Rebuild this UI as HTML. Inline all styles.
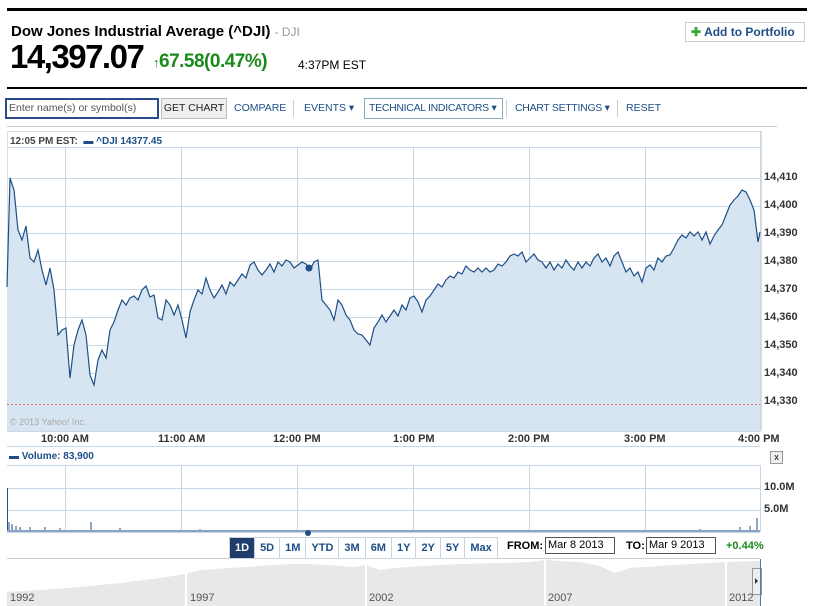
<!DOCTYPE html>
<html><head><style>
body{margin:0;width:823px;height:606px;background:#fff;font-family:"Liberation Sans",sans-serif;position:relative;overflow:hidden}
.a{position:absolute;white-space:nowrap}
.nav{font-size:10.5px;color:#1d4f86;top:102px}
.ax{font-size:11px;font-weight:bold;color:#333}
.rb{display:inline-block;border-right:1px solid #c8d3e0;height:20px;line-height:20px;padding:0 5px;font-size:11px;font-weight:bold;color:#1d4f86}
</style></head><body>
<div class="a" style="left:7px;top:8px;width:800px;height:3px;background:#000"></div>
<div class="a" style="left:11px;top:23px;font-size:15px;font-weight:bold;color:#000">Dow Jones Industrial Average (^DJI) <span style="font-weight:normal;color:#999;font-size:12px">- DJI</span></div>
<div class="a" style="left:685px;top:22px;width:118px;height:18px;border:1px solid #ccc;font-size:12px;font-weight:bold;color:#1d4f86;line-height:18px"><span style="color:#3a3;margin:0 3px 0 5px">✚</span>Add to Portfolio</div>
<div class="a" style="left:10px;top:38px;font-size:33px;font-weight:bold;color:#000;letter-spacing:-1.5px">14,397.07</div>
<div class="a" style="left:153px;top:51px;font-size:19px;font-weight:bold;color:#1a8a1a;letter-spacing:-0.5px"><span style="font-size:13px">↑</span>67.58(0.47%)</div>
<div class="a" style="left:298px;top:58px;font-size:12px;color:#000">4:37PM EST</div>
<div class="a" style="left:7px;top:87px;width:800px;height:2px;background:#000"></div>
<div class="a" style="left:5px;top:98px;width:148px;height:17px;border:2px solid #2a4a8a;font-size:10.5px;color:#555;line-height:17px;padding-left:2px">Enter name(s) or symbol(s)</div>
<div class="a" style="left:161px;top:98px;width:64px;height:19px;border:1px solid #bbb;background:#eee;font-size:10.5px;color:#222;line-height:19px;text-align:center">GET CHART</div>
<div class="a nav" style="left:234px">COMPARE</div>
<div class="a" style="left:293px;top:100px;width:1px;height:17px;background:#ccc"></div>
<div class="a nav" style="left:304px">EVENTS ▾</div>
<div class="a" style="left:364px;top:98px;width:137px;height:19px;border:1px solid #8ab"></div>
<div class="a nav" style="left:369px;letter-spacing:-0.3px">TECHNICAL INDICATORS ▾</div>
<div class="a" style="left:506px;top:100px;width:1px;height:17px;background:#ccc"></div>
<div class="a nav" style="left:515px;letter-spacing:-0.3px">CHART SETTINGS ▾</div>
<div class="a" style="left:617px;top:100px;width:1px;height:17px;background:#ccc"></div>
<div class="a nav" style="left:626px">RESET</div>
<div class="a" style="left:7px;top:126px;width:770px;height:1px;background:#ccc"></div>
<div class="a" style="left:7px;top:131px;width:753px;height:300px;border:1px solid #ddd;border-bottom:none"></div>
<div class="a" style="left:10px;top:136px;font-size:10px;font-weight:bold;color:#444">12:05 PM EST: &nbsp;<span style="color:#1d4f86">▬ ^DJI 14377.45</span></div>
<svg class="a" style="left:0;top:0" width="823" height="606">
<g stroke="#c7d7e6" stroke-width="1">
<line x1="7" y1="147.5" x2="760" y2="147.5"/>
<line x1="7" y1="178.5" x2="760" y2="178.5"/><line x1="7" y1="206.5" x2="760" y2="206.5"/><line x1="7" y1="233.5" x2="760" y2="233.5"/><line x1="7" y1="261.5" x2="760" y2="261.5"/><line x1="7" y1="289.5" x2="760" y2="289.5"/><line x1="7" y1="317.5" x2="760" y2="317.5"/><line x1="7" y1="345.5" x2="760" y2="345.5"/><line x1="7" y1="373.5" x2="760" y2="373.5"/>
<line x1="65.5" y1="147" x2="65.5" y2="431"/><line x1="181.5" y1="147" x2="181.5" y2="431"/><line x1="297.5" y1="147" x2="297.5" y2="431"/><line x1="413.5" y1="147" x2="413.5" y2="431"/><line x1="529.5" y1="147" x2="529.5" y2="431"/><line x1="645.5" y1="147" x2="645.5" y2="431"/><line x1="760.5" y1="131" x2="760.5" y2="431"/>
<line x1="7" y1="431.5" x2="760" y2="431.5"/>
<line x1="7" y1="446.5" x2="760" y2="446.5"/>
<line x1="7" y1="465.5" x2="760" y2="465.5"/><line x1="7" y1="488.5" x2="760" y2="488.5"/><line x1="7" y1="510.5" x2="760" y2="510.5"/><line x1="7" y1="532.5" x2="760" y2="532.5"/>
<line x1="65.5" y1="465" x2="65.5" y2="532"/><line x1="181.5" y1="465" x2="181.5" y2="532"/><line x1="297.5" y1="465" x2="297.5" y2="532"/><line x1="413.5" y1="465" x2="413.5" y2="532"/><line x1="529.5" y1="465" x2="529.5" y2="532"/><line x1="645.5" y1="465" x2="645.5" y2="532"/><line x1="760.5" y1="465" x2="760.5" y2="532"/>
</g>
<polygon fill="#d6e5f1" stroke="none" points="7,431 7,287 10,178 14,190 18,230 22,240 26,226 30,258 34,262 38,250 42,270 46,285 50,268 54,290 58,335 62,330 66,328 70,378 74,345 78,330 82,320 86,335 90,375 94,385 98,360 102,350 106,358 110,330 114,322 118,310 122,300 126,305 130,298 134,296 138,300 142,290 146,286 150,297 154,295 158,318 162,320 166,300 170,305 174,315 178,305 182,320 186,338 190,312 194,300 198,290 202,294 206,278 210,290 214,298 218,292 222,285 226,294 230,282 234,286 238,280 242,274 246,278 250,265 254,262 258,270 262,275 266,270 270,264 274,272 278,262 282,266 286,260 290,262 294,268 298,265 302,262 306,264 310,270 314,262 318,260 322,300 326,305 330,310 334,320 338,300 342,305 346,315 350,320 354,330 358,334 362,335 366,340 370,345 374,328 378,322 382,315 386,322 390,316 394,310 398,316 402,305 406,310 410,298 414,296 418,302 422,312 426,300 430,296 434,290 438,284 442,287 446,280 450,276 454,278 458,272 462,274 466,266 470,270 474,272 478,268 482,272 486,268 490,272 494,270 498,264 502,266 506,262 510,256 514,254 518,256 522,252 526,262 530,258 534,254 538,260 542,262 546,268 550,262 554,270 558,264 562,268 566,260 570,266 574,270 578,262 582,268 586,262 590,266 594,258 598,254 602,262 606,258 610,266 614,256 618,252 622,262 626,272 630,268 634,276 638,272 642,282 646,268 650,265 654,270 658,258 662,262 666,256 670,255 674,248 678,240 682,235 686,238 690,232 694,236 698,232 702,240 706,232 710,244 714,236 718,230 722,225 726,215 730,205 734,200 738,196 742,190 746,192 750,200 754,210 758,242 760,232 760,431"/>
<polyline fill="none" stroke="#1f4f86" stroke-width="1.2" points="7,287 10,178 14,190 18,230 22,240 26,226 30,258 34,262 38,250 42,270 46,285 50,268 54,290 58,335 62,330 66,328 70,378 74,345 78,330 82,320 86,335 90,375 94,385 98,360 102,350 106,358 110,330 114,322 118,310 122,300 126,305 130,298 134,296 138,300 142,290 146,286 150,297 154,295 158,318 162,320 166,300 170,305 174,315 178,305 182,320 186,338 190,312 194,300 198,290 202,294 206,278 210,290 214,298 218,292 222,285 226,294 230,282 234,286 238,280 242,274 246,278 250,265 254,262 258,270 262,275 266,270 270,264 274,272 278,262 282,266 286,260 290,262 294,268 298,265 302,262 306,264 310,270 314,262 318,260 322,300 326,305 330,310 334,320 338,300 342,305 346,315 350,320 354,330 358,334 362,335 366,340 370,345 374,328 378,322 382,315 386,322 390,316 394,310 398,316 402,305 406,310 410,298 414,296 418,302 422,312 426,300 430,296 434,290 438,284 442,287 446,280 450,276 454,278 458,272 462,274 466,266 470,270 474,272 478,268 482,272 486,268 490,272 494,270 498,264 502,266 506,262 510,256 514,254 518,256 522,252 526,262 530,258 534,254 538,260 542,262 546,268 550,262 554,270 558,264 562,268 566,260 570,266 574,270 578,262 582,268 586,262 590,266 594,258 598,254 602,262 606,258 610,266 614,256 618,252 622,262 626,272 630,268 634,276 638,272 642,282 646,268 650,265 654,270 658,258 662,262 666,256 670,255 674,248 678,240 682,235 686,238 690,232 694,236 698,232 702,240 706,232 710,244 714,236 718,230 722,225 726,215 730,205 734,200 738,196 742,190 746,192 750,200 754,210 758,242 760,232"/>
<circle cx="309" cy="268" r="3.5" fill="#1f4f86"/>
<line x1="7" y1="404.5" x2="760" y2="404.5" stroke="#e87060" stroke-dasharray="2,2"/>
<rect x="7" y="488" width="1" height="44" fill="#1f4f86"/>
<path d="M9 532V522M12 532V524M16 532V526M20 532V527M30 532V527M45 532V527M60 532V528M91 532V522M120 532V528M200 532V529M300 532V530M500 532V530M700 532V529M740 532V527M750 532V526M757 532V518" stroke="#1f4f86" stroke-width="1"/>
<rect x="7" y="530" width="753" height="2" fill="#8aa4c4"/>
<circle cx="308" cy="533" r="3" fill="#1f4f86"/>
<path d="M7 606V592L40 590L80 587L120 583L160 578L186 574L200 570L230 568L260 566L290 564L310 564L340 566L355 567L366 565L380 570L395 568L420 566L460 564L500 563L530 562L545 560L560 561L580 562L600 566L615 573L630 568L660 566L690 564L726 562L760 561V606Z" fill="#e8e8e8"/>
<g stroke="#fff" stroke-width="2"><line x1="186" y1="560" x2="186" y2="606"/><line x1="366" y1="560" x2="366" y2="606"/><line x1="545" y1="556" x2="545" y2="606"/><line x1="726" y1="556" x2="726" y2="606"/></g>
<line x1="7" y1="558.5" x2="760" y2="558.5" stroke="#ccc"/>
<rect x="752.5" y="568.5" width="9" height="26" fill="#eee" stroke="#999"/>
<path d="M755 578l3 3-3 3z" fill="#333"/>
<line x1="760.5" y1="559" x2="760.5" y2="606" stroke="#3a7fd0"/>
</svg>
<div class="a" style="left:10px;top:417px;font-size:9px;color:#aaa">© 2013 Yahoo! Inc.</div>
<div class="a ax" style="left:764px;top:171px">14,410</div>
<div class="a ax" style="left:764px;top:199px">14,400</div>
<div class="a ax" style="left:764px;top:227px">14,390</div>
<div class="a ax" style="left:764px;top:255px">14,380</div>
<div class="a ax" style="left:764px;top:283px">14,370</div>
<div class="a ax" style="left:764px;top:311px">14,360</div>
<div class="a ax" style="left:764px;top:339px">14,350</div>
<div class="a ax" style="left:764px;top:367px">14,340</div>
<div class="a ax" style="left:764px;top:395px">14,330</div>
<div class="a ax" style="left:41px;top:433px">10:00 AM</div>
<div class="a ax" style="left:158px;top:433px">11:00 AM</div>
<div class="a ax" style="left:273px;top:433px">12:00 PM</div>
<div class="a ax" style="left:393px;top:433px">1:00 PM</div>
<div class="a ax" style="left:508px;top:433px">2:00 PM</div>
<div class="a ax" style="left:624px;top:433px">3:00 PM</div>
<div class="a ax" style="left:738px;top:433px">4:00 PM</div>
<div class="a" style="left:9px;top:451px;font-size:10px;font-weight:bold;color:#1d4f86">▬ Volume: 83,900</div>
<div class="a" style="left:770px;top:451px;width:11px;height:11px;border:1px solid #999;background:#eee;font-size:9px;line-height:11px;text-align:center">x</div>
<div class="a ax" style="left:764px;top:481px">10.0M</div>
<div class="a ax" style="left:764px;top:503px">5.0M</div>
<div class="a" style="left:229px;top:537px;border:1px solid #c8d3e0;border-right:none;height:20px;display:flex"><span class="rb" style="background:#1f3d6a;color:#fff">1D</span><span class="rb">5D</span><span class="rb">1M</span><span class="rb">YTD</span><span class="rb">3M</span><span class="rb">6M</span><span class="rb">1Y</span><span class="rb">2Y</span><span class="rb">5Y</span><span class="rb">Max</span></div>
<div class="a" style="left:507px;top:540px;font-size:11px;font-weight:bold;color:#000">FROM:</div>
<div class="a" style="left:545px;top:537px;width:66px;height:15px;border:1px solid #555;font-size:11px;padding-left:2px;line-height:15px">Mar 8 2013</div>
<div class="a" style="left:626px;top:540px;font-size:11px;font-weight:bold;color:#000">TO:</div>
<div class="a" style="left:646px;top:537px;width:66px;height:15px;border:1px solid #555;font-size:11px;padding-left:2px;line-height:15px">Mar 9 2013</div>
<div class="a" style="left:726px;top:540px;font-size:11px;font-weight:bold;color:#1a8a1a">+0.44%</div>
<div class="a" style="left:10px;top:592px;font-size:11px;color:#555">1992</div>
<div class="a" style="left:190px;top:592px;font-size:11px;color:#555">1997</div>
<div class="a" style="left:369px;top:592px;font-size:11px;color:#555">2002</div>
<div class="a" style="left:548px;top:592px;font-size:11px;color:#555">2007</div>
<div class="a" style="left:729px;top:592px;font-size:11px;color:#555">2012</div>
</body></html>
